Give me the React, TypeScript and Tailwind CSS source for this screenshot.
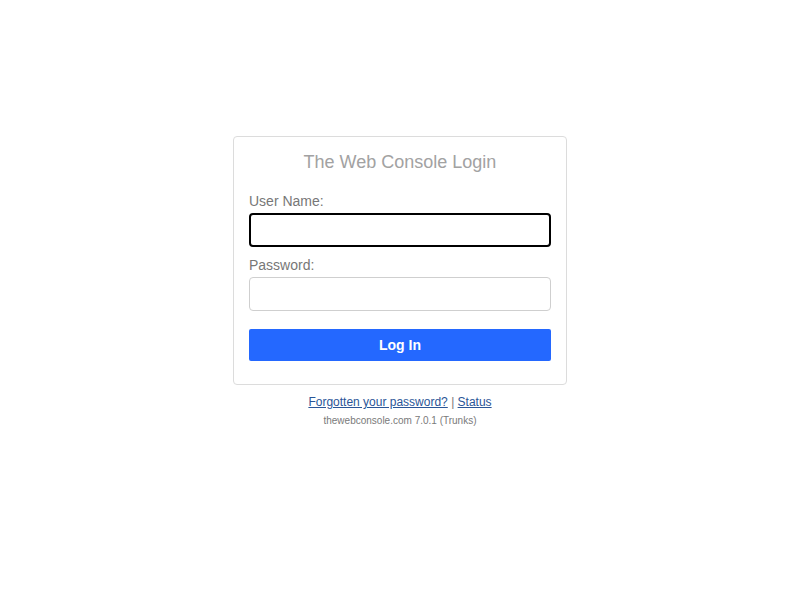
export default function App() {
  return (
    <div className="min-h-[600px] w-full bg-white pt-[136px] font-['Liberation_Sans',Arial,sans-serif]">
      <div className="mx-auto w-[334px]">
        {/* Login card */}
        <div className="rounded-[4px] border border-[#dcdcdc] px-[15px] pt-[13px] pb-[23px]">
          <h1 className="text-center text-[18px] leading-[24px] text-[#a2a2a2]">
            The Web Console Login
          </h1>
          <form className="mt-[17px]" onSubmit={(e) => e.preventDefault()}>
            <label htmlFor="user" className="block text-[14px] leading-[20px] text-[#777]">
              User Name:
            </label>
            <input
              id="user"
              type="text"
              className="mt-[2px] block h-[34px] w-full rounded-[4px] border-2 border-black bg-white px-2 text-[14px] outline-none"
            />
            <label htmlFor="pass" className="mt-[8px] block text-[14px] leading-[20px] text-[#777]">
              Password:
            </label>
            <input
              id="pass"
              type="password"
              className="mt-[2px] block h-[34px] w-full rounded-[4px] border border-[#cfcfcf] bg-white px-2 text-[14px] outline-none"
            />
            <button
              type="submit"
              className="mt-[18px] block h-[32px] w-full rounded-[2px] bg-[#2468ff] text-[14px] font-bold text-white"
            >
              Log In
            </button>
          </form>
        </div>

        {/* Footer */}
        <div className="mt-[9px] text-center text-[12px] leading-[16px] text-[#777]">
          <a href="#" className="text-[#2a5597] underline">
            Forgotten your password?
          </a>{' '}
          |{' '}
          <a href="#" className="text-[#2a5597] underline">
            Status
          </a>
        </div>
        <div className="mt-[4px] text-center text-[10px] leading-[14px] text-[#7a7a7a]">
          thewebconsole.com 7.0.1 (Trunks)
        </div>
      </div>
    </div>
  );
}
